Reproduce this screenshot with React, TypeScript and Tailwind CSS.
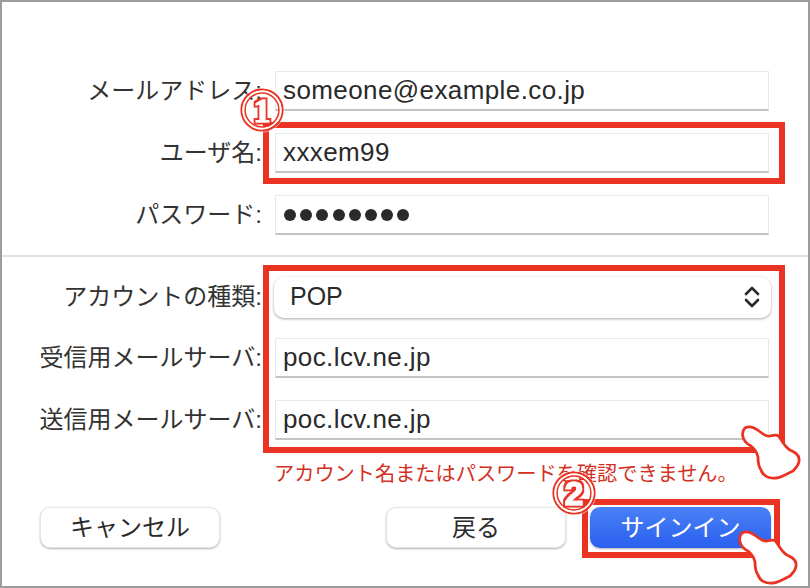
const font = "[font-family:'Liberation_Sans','Noto_Sans_CJK_JP',sans-serif]";

function Field({ label, value, dots }: { label: string; value?: string; dots?: boolean }) {
  return (
    <div className="flex items-center h-10 mb-[22px]">
      <div className="w-[262px] text-right text-[24px] leading-none text-[#333333] whitespace-nowrap shrink-0">{label}</div>
      <div className="ml-[13px] w-[494px] h-10 flex items-center pl-[7px] bg-white border border-[#e8e8e8] border-b-2 border-b-[#c4c4c4] text-[26px] tracking-[0.4px] text-[#2a2a2a]">
        {dots ? (
          <div className="flex gap-[4.2px] pl-px">
            {[0, 1, 2, 3, 4, 5, 6, 7].map((i) => (
              <span key={i} className="w-3 h-3 rounded-full bg-[#2a2a2a]" />
            ))}
          </div>
        ) : (
          value
        )}
      </div>
    </div>
  );
}

function Badge({ n, family, className }: { n: string; family: string; className: string }) {
  const id = `outline-${n}`;
  return (
    <svg className={`absolute ${className}`} width="48" height="48" viewBox="0 0 48 48" fill="none">
      <defs>
        <filter id={id} x="-30%" y="-30%" width="160%" height="160%">
          <feMorphology in="SourceAlpha" operator="dilate" radius="1.5" result="grown" />
          <feFlood floodColor="#ea3323" />
          <feComposite in2="grown" operator="in" result="edge" />
          <feMerge>
            <feMergeNode in="edge" />
            <feMergeNode in="SourceGraphic" />
          </feMerge>
        </filter>
      </defs>
      <circle cx="24" cy="24" r="22" stroke="#ffffff" strokeWidth="1" opacity="0.7" />
      <circle cx="24" cy="24" r="20.6" stroke="#ea3323" strokeWidth="2" />
      <circle cx="24" cy="24" r="18.6" stroke="#ffffff" strokeWidth="2" />
      <circle cx="24" cy="24" r="16.9" stroke="#ea3323" strokeWidth="1.5" />
      <text
        x="24"
        y="36"
        textAnchor="middle"
        fontSize="34"
        fontWeight="700"
        fontFamily={family}
        fill="#ffffff"
        stroke="#ffffff"
        strokeWidth="1"
        filter={`url(#${id})`}
      >
        {n}
      </text>
    </svg>
  );
}

function Hand({ className }: { className: string }) {
  return (
    <svg className={`absolute blur-[0.6px] ${className}`} width="70" height="65" viewBox="0 0 70 65">
      <path
        d="M10 8 C15 5 20 8 24 11 C28 14 31 17 35 16 C39 15 43 14 45 18 C48 23 51 28 55 30 C59 32 64 34 64 39 C65 44 61 48 58 51 C53 53 48 57 41 58 C34 59 28 56 26 50 C23 46 23 42 23 37 C22 32 20 29 16 26 C12 24 9 21 8 17 C7 13 8 10 10 8 Z"
        fill="#ffffff"
        stroke="#ea3323"
        strokeWidth="2.8"
        strokeLinejoin="round"
      />
    </svg>
  );
}

export default function App() {
  return (
    <div className={`relative w-[810px] h-[588px] box-border bg-white border-2 border-[#9c9c9c] overflow-hidden ${font}`}>
      <div className="pt-[69px] -ml-[2px]">
        <Field label="メールアドレス:" value="someone@example.co.jp" />
        <Field label="ユーザ名:" value="xxxem99" />
        <Field label="パスワード:" dots />
        <div className="h-0.5 -mt-[2px] bg-[#e3e3e3]" />
        <div className="h-[20px]" />
        <div className="flex items-center h-10 mb-[21px]">
          <div className="w-[262px] text-right text-[24px] leading-none text-[#333333] whitespace-nowrap shrink-0">アカウントの種類:</div>
          <div className="ml-[12px] w-[497px] h-[41px] flex items-center justify-between pl-4 pr-[11px] bg-white rounded-[10px] shadow-[0_1px_3px_rgba(0,0,0,0.35)] text-[25px] text-[#2a2a2a]">
            POP
            <svg width="16" height="24" viewBox="0 0 16 24" fill="none" stroke="#2a2a2a" strokeWidth="2.6" strokeLinecap="round" strokeLinejoin="round">
              <path d="M2 9 L8 3 L14 9" />
              <path d="M2 15 L8 21 L14 15" />
            </svg>
          </div>
        </div>
        <Field label="受信用メールサーバ:" value="poc.lcv.ne.jp" />
        <Field label="送信用メールサーバ:" value="poc.lcv.ne.jp" />
        <div className="-mt-[5px] pl-[274px] h-[34px] flex items-center text-[20.2px] text-[#d3301f] whitespace-nowrap">
          アカウント名またはパスワードを確認できません。
        </div>
        <div className="mt-[16px] flex items-center pl-[40px]">
          <button className="w-[180px] h-[41px] bg-white rounded-[10px] border border-[#e6e6e6] shadow-[0_1px_2px_rgba(0,0,0,0.3)] text-[24px] text-[#2a2a2a]">キャンセル</button>
          <button className="ml-[166px] w-[180px] h-[41px] bg-white rounded-[10px] border border-[#e6e6e6] shadow-[0_1px_2px_rgba(0,0,0,0.3)] text-[24px] text-[#2a2a2a]">戻る</button>
          <button className="ml-[24px] w-[181px] h-[41px] rounded-[10px] bg-gradient-to-b from-[#4a80f6] to-[#2a60ee] shadow-[0_1px_2px_rgba(0,0,0,0.3)] text-[24px] text-white">サインイン</button>
        </div>
      </div>

      <div className="absolute left-[261px] top-[120px] w-[522px] h-[62px] border-[6px] border-[#ea3323]" />
      <div className="absolute left-[261px] top-[263px] w-[522px] h-[188px] border-[6px] border-[#ea3323]" />
      <div className="absolute left-[580px] top-[497px] w-[198px] h-[59px] border-[6px] border-[#ea3323]" />

      <Badge n="1" family="'Liberation Serif', serif" className="left-[236px] top-[84px]" />
      <Badge n="2" family="'Liberation Sans', sans-serif" className="left-[548px] top-[467px]" />
      <Hand className="left-[733px] top-[418px]" />
      <Hand className="left-[730px] top-[523px]" />
    </div>
  );
}
